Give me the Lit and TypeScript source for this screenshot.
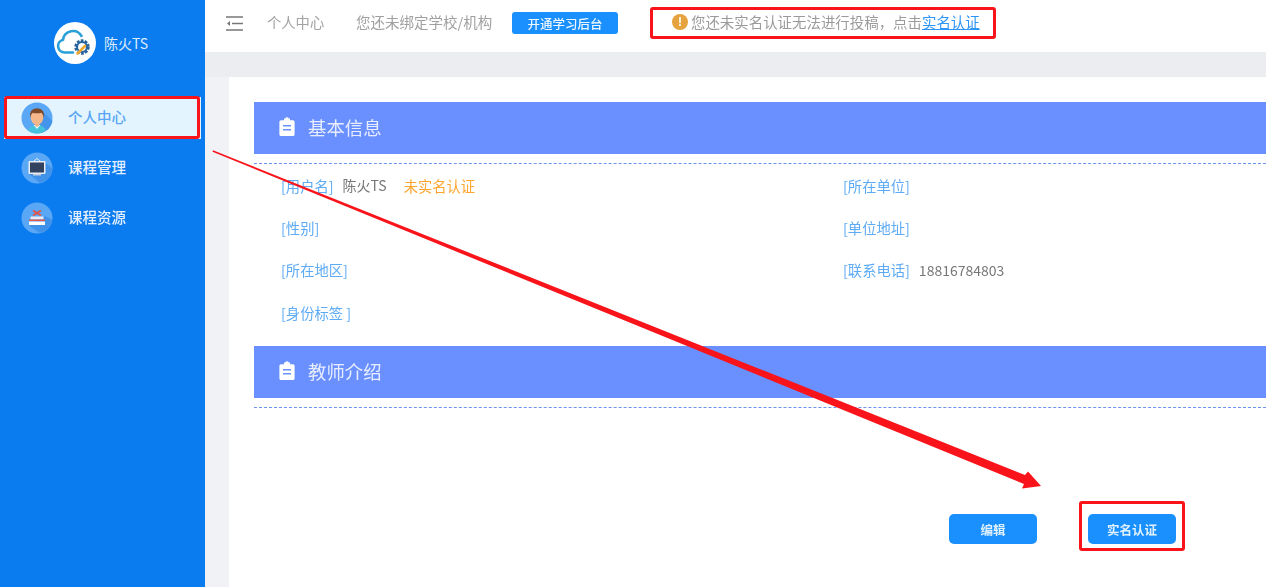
import { LitElement, html, css, svg } from "lit";
import { customElement } from "lit/decorators.js";

const clipboard = html`<svg class="clip" viewBox="0 0 16 20" width="16" height="20">
  <path fill="#fff" fill-rule="evenodd" d="M5 1.500h1.200a2 2 0 0 1 3.600 0H11v1.700h3a1.600 1.600 0 0 1 1.600 1.600v12.600a1.600 1.600 0 0 1-1.600 1.600H2a1.600 1.600 0 0 1-1.600-1.600V4.800A1.600 1.600 0 0 1 2 3.200h3ZM4 8v1.600h8V8Zm0 4v1.600h8V12Z"/>
</svg>`;

const avatarIcon = svg`<circle cx="16" cy="16" r="15.500" fill="#5aa7f5"/>
  <path d="M22 10 L31.500 19 A15.500 15.500 0 0 1 20 31 L12 25Z" fill="#4394ea"/>
  <path d="M7 28.500 q2-5.500 9-5.500 q7 0 9 5.500 a15.500 15.500 0 0 1-18 0Z" fill="#45c2dc"/>
  <path d="M12.500 23h7l-3.500 4Z" fill="#eaf8fb"/>
  <path d="M13.800 20h4.400v3.500l-2.200 1.500-2.200-1.500Z" fill="#eeb083"/>
  <ellipse cx="16" cy="15.500" rx="6.300" ry="7.300" fill="#f6b78a"/>
  <path d="M9.300 16 q-1.500-9.500 6.700-9.700 q8.200.2 6.700 9.700 q-.6-4-2.200-5.200 q-4.500 1-8.800 0 q-1.800 1.400-2.400 5.200Z" fill="#7f4a2a"/>`;

const boardIcon = svg`<circle cx="16" cy="16" r="15.500" fill="#5aa7f5"/>
  <path d="M24 10 L31.500 17 A15.500 15.500 0 0 1 19 31 L8 22Z" fill="#3f92e8"/>
  <path d="M13 9 L16 6.500 L19 9" fill="none" stroke="#e8edf5" stroke-width="1"/>
  <rect x="7.500" y="9" width="17" height="13" rx="1" fill="#e8edf5"/>
  <rect x="9" y="10.500" width="14" height="10" fill="#33435f"/>
  <rect x="12" y="22" width="8" height="1.500" fill="#c6ced9"/>`;

const booksIcon = svg`<circle cx="16" cy="16" r="15.500" fill="#5aa7f5"/>
  <path d="M24 14 L31.500 18 A15.500 15.500 0 0 1 19 31 L8 24Z" fill="#3f92e8"/>
  <path d="M12 8.500l8 5M20 8.500l-8 5" stroke="#e0554c" stroke-width="2"/>
  <rect x="9.500" y="14.500" width="13" height="3" fill="#e8edf5"/>
  <rect x="8" y="17.500" width="16" height="1.500" fill="#e0554c"/>
  <rect x="8" y="19.500" width="16" height="3.500" fill="#fff"/>`;

@customElement("app-root")
export class AppRoot extends LitElement {
  static styles = css`
    :host {
      display: block;
      width: 1266px;
      height: 587px;
      overflow: hidden;
      position: relative;
      font-family: "Noto Sans CJK SC", "Noto Sans", sans-serif;
      background: #f0f2f6;
    }
    .shell { display: flex; height: 587px; filter: blur(0.45px); }
    .side { width: 205px; flex: none; background: #0a7cf0; }
    .brand { display: flex; align-items: center; height: 97px; padding: 0 0 12px 54px; box-sizing: border-box; gap: 8px; }
    .logo { width: 42px; height: 42px; border-radius: 50%; background: #fff; display: flex; align-items: center; justify-content: center; }
    .brand span { color: #dcecff; font-size: 14px; }
    .item { display: flex; align-items: center; height: 42px; margin-bottom: 8px; padding: 0 0 4px 21px; box-sizing: border-box; gap: 15px; color: #e3efff; font-size: 14.500px; font-weight: 500; }
    .item.on { background: #e3f4ff; color: #58a6f5; margin: 0 0 8px 4px; padding-left: 17px; width: 197px; }
    .item svg { width: 32px; height: 32px; flex: none; margin-top: 4px; }
    .main { flex: 1; min-width: 0; display: flex; flex-direction: column; }
    .top { height: 52px; flex: none; background: #fff; display: flex; align-items: center; color: #a3a3a3; font-size: 14.300px; padding: 0 0 10px 21px; box-sizing: border-box; }
    .top > svg { margin-top: 5px; }
    .crumb { margin-left: 24px; width: 89px; }
    .bind { color: #a0a0a0; font-size: 14.500px; width: 156px; white-space: nowrap; }
    .open { width: 106px; height: 22px; margin-top: 4px; border-radius: 3px; background: #1a90ff; color: #eef7ff; font-size: 12.500px; font-weight: 500; display: flex; align-items: center; justify-content: center; }
    .warn { display: flex; align-items: center; margin-left: 54px; font-size: 14.450px; color: #9a9a9a; gap: 3px; white-space: nowrap; }
    .warn i { width: 16px; height: 16px; margin-top: 2px; border-radius: 50%; background: #e6a23c; color: #fff; font: 700 12px/16px "Liberation Sans", sans-serif; text-align: center; }
    .warn a { color: #2d95f5; text-decoration: underline; }
    .body { flex: 1; padding: 25px 0 0 24px; min-height: 0; background: linear-gradient(#ebedf1 25px, #f0f2f6 25px); }
    .card { background: #fff; height: 100%; padding: 25px 0 0 25px; box-sizing: border-box; }
    .bar { height: 52px; background: #6a90ff; display: flex; align-items: center; gap: 13px; padding: 0 0 2px 25px; box-sizing: border-box; color: #e7edff; font-size: 18.400px; }
    .dash { border-top: 1px dashed #6f93f0; margin-top: 9px; }
    .grid { display: grid; grid-template-columns: 562px 1fr; grid-auto-rows: 42.400px; padding-left: 27px; height: 182px; box-sizing: border-box; font-size: 14.300px; }
    .cell { display: flex; align-items: center; color: #777; white-space: pre; }
    .label { color: #5dabf5; }
    .val { margin-left: 9px; font-size: 14px; }
    .no { color: #fda52e; margin-left: 17px; }
    .actions { display: flex; gap: 51px; padding: 106px 0 0 695px; }
    .btn { width: 88px; height: 30px; border-radius: 5px; background: #1a90ff; color: #dff0ff; font-size: 12.500px; font-weight: 700; display: flex; align-items: center; justify-content: center; }
    .marks { position: absolute; left: 0; top: 0; width: 1266px; height: 587px; pointer-events: none; }
  `;

  private row(label: string, rest: unknown = "") {
    return html`<div class="cell"><span class="label">${label}</span>${rest}</div>`;
  }

  render() {
    return html`
      <div class="shell">
        <aside class="side">
          <div class="brand">
            <div class="logo">
              <svg viewBox="0 0 42 42" width="42" height="42">
                <path d="M19 30.500H10.500a6.500 6.500 0 0 1-1.500-12.800 A10 10 0 0 1 27.500 14" fill="none" stroke="#2aa0d8" stroke-width="2.600" stroke-linecap="round"/>
                <circle cx="28" cy="25" r="6.200" fill="none" stroke="#27639e" stroke-width="3" stroke-dasharray="2.600 1.300"/>
                <circle cx="28" cy="25" r="4.900" fill="none" stroke="#27639e" stroke-width="2"/>
                <path d="M23.500 31.500 L31 24" stroke="#f0a92e" stroke-width="2.600" stroke-linecap="round"/>
              </svg>
            </div>
            <span>陈火TS</span>
          </div>
          <div class="item on"><svg viewBox="0 0 32 32">${avatarIcon}</svg>个人中心</div>
          <div class="item"><svg viewBox="0 0 32 32">${boardIcon}</svg>课程管理</div>
          <div class="item"><svg viewBox="0 0 32 32">${booksIcon}</svg>课程资源</div>
        </aside>
        <div class="main">
          <header class="top">
            <svg width="17" height="15" viewBox="0 0 17 15">
              <path d="M0 1h17M6 7.500h11M0 14h17" stroke="#777" stroke-width="1.500" fill="none"/>
              <path d="M4 5L1 7.500 4 10Z" fill="#777"/>
            </svg>
            <span class="crumb">个人中心</span>
            <span class="bind">您还未绑定学校/机构</span>
            <span class="open">开通学习后台</span>
            <span class="warn"><i>!</i><span>您还未实名认证无法进行投稿，点击<a>实名认证</a></span></span>
          </header>
          <div class="body">
            <section class="card">
              <div class="bar">${clipboard}基本信息</div>
              <div class="dash"></div>
              <div class="grid">
                ${this.row("[用户名]", html`<span class="val">陈火TS</span><span class="no">未实名认证</span>`)}
                ${this.row("[所在单位]")}
                ${this.row("[性别]")}
                ${this.row("[单位地址]")}
                ${this.row("[所在地区]")}
                ${this.row("[联系电话]", html`<span class="val">18816784803</span>`)}
                ${this.row("[身份标签 ]")}
              </div>
              <div class="bar">${clipboard}教师介绍</div>
              <div class="dash"></div>
              <div class="actions">
                <div class="btn">编辑</div>
                <div class="btn">实名认证</div>
              </div>
            </section>
          </div>
        </div>
      </div>
      <svg class="marks" viewBox="0 0 1266 587">
        <g fill="none" stroke="#f8141a" stroke-width="3">
          <rect x="5.500" y="97.500" width="193" height="40" rx="1.500"/>
          <rect x="651.500" y="8.500" width="343" height="29" rx="1.500"/>
          <rect x="1080.500" y="502.500" width="103" height="47" rx="1.500"/>
        </g>
        <polygon fill="#f8141a" points="213,150.300 1025,475 1028,471.500 1041,486 1022,488.500 1024,484 212.500,151.700"/>
      </svg>
    `;
  }
}
